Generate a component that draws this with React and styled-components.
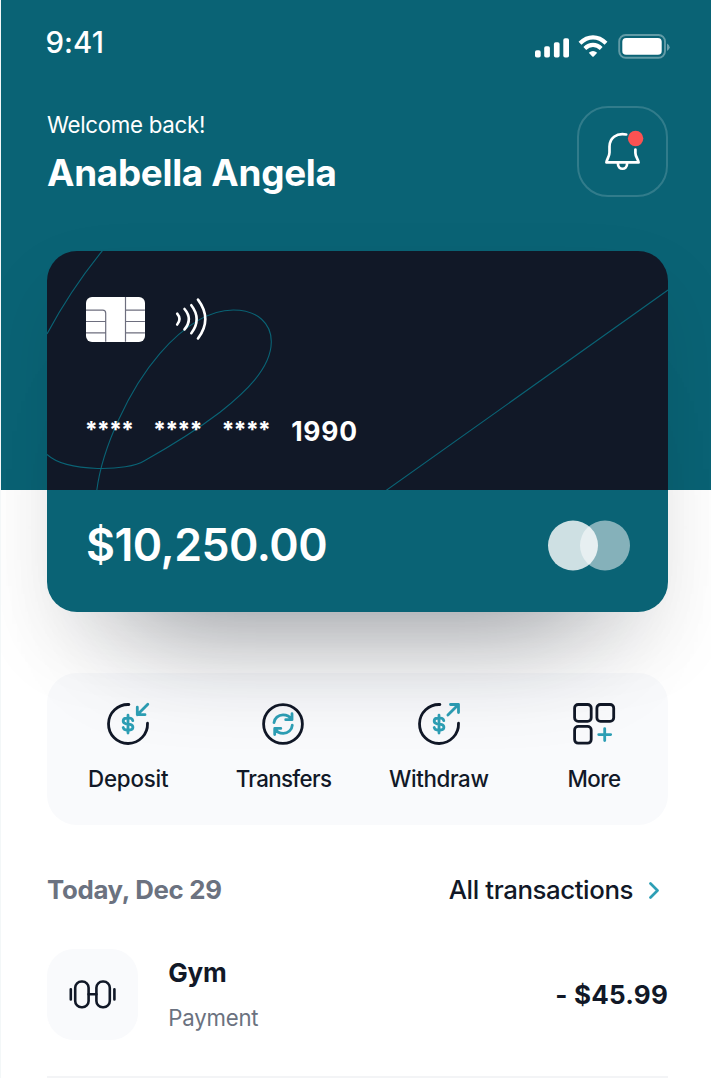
import React from "react";
import styled, { createGlobalStyle } from "styled-components";

const teal = "#0a6375";
const ink = "#111827";
const accent = "#2d9fb5";
const muted = "#6b7280";

const GlobalStyle = createGlobalStyle`
  *, *::before, *::after { box-sizing: border-box; }
  body { margin: 0; background: #fff; overflow: hidden; }
`;

const Screen = styled.main`
  width: 711px;
  height: 1078px;
  overflow: hidden;
  padding: 0 43px 0 46px;
  border-left: 1px solid #f3f7f8;
  font-family: Inter, "Liberation Sans", sans-serif;
  color: ${ink};
  background: linear-gradient(${teal} 490px, #fff 490px);
  display: flex;
  flex-direction: column;
`;

const Text = styled.span`
  display: block;
  white-space: nowrap;
  font-size: ${(p) => p.$size}px;
  line-height: ${(p) => p.$line || 32}px;
  font-weight: ${(p) => p.$weight || 400};
  letter-spacing: ${(p) => p.$track || 0}px;
  color: ${(p) => p.$color || "inherit"};
`;

const StatusBar = styled.header`
  display: flex;
  justify-content: space-between;
  height: 64px;
  padding: 26px 0 0;
  margin: 0 -2px 0 -1.5px;
  color: #fff;
`;

const StatusIconSlot = styled.div`
  padding-top: 6px;
  height: 34px;
`;

const Greeting = styled.section`
  display: flex;
  justify-content: space-between;
  height: 91px;
  margin-top: 42px;
  color: #fff;
`;

const GreetingText = styled.div`
  padding-top: 3px;
  display: flex;
  flex-direction: column;
`;

const BellButton = styled.button`
  width: 91px;
  height: 91px;
  padding: 0;
  border: 2px solid rgba(255, 255, 255, 0.16);
  border-radius: 31px;
  background: none;
  display: grid;
  place-items: center;
`;

const Card = styled.section`
  position: relative;
  z-index: 1;
  height: 361px;
  margin-top: 54px;
  border-radius: 30px;
  color: #fff;
  box-shadow: 0 96px 114px -84px rgba(17, 24, 39, 0.42), 0 36px 80px rgba(0, 0, 0, 0.08);
`;

const CardFace = styled.div`
  position: relative;
  height: 239px;
  overflow: hidden;
  background: ${ink};
  border-radius: 30px 30px 0 0;
  padding: 46px 39px 0;
`;

const CardLines = styled.svg`
  position: absolute;
  inset: 0;
`;

const CardTop = styled.div`
  position: relative;
  display: flex;
  gap: 28px;
  height: 46px;
`;

const CardNumber = styled.div`
  position: relative;
  display: flex;
  margin-top: 72px;
`;

const MaskGroup = styled(Text)`
  width: 68.4px;
  text-indent: -1.3px;
`;

const CardFooter = styled.div`
  height: 122px;
  background: ${teal};
  border-radius: 0 0 30px 30px;
  padding: 0 38px 12px 39px;
  display: flex;
  align-items: center;
  justify-content: space-between;
`;

const Actions = styled.nav`
  display: grid;
  grid-template-columns: repeat(4, 155.3px);
  height: 152px;
  margin-top: 61px;
  padding: 29px 0 0 3.5px;
  border-radius: 30px;
  background: #f9fafc;
`;

const Action = styled.div`
  display: flex;
  flex-direction: column;
  align-items: center;
  gap: 17px;
`;

const ListHeader = styled.div`
  display: flex;
  justify-content: space-between;
  align-items: center;
  height: 32px;
  margin-top: 49px;
`;

const AllLink = styled.a`
  display: flex;
  align-items: center;
  gap: 15px;
  padding-right: 8px;
`;

const Transaction = styled.article`
  display: flex;
  align-items: center;
  height: 91px;
  margin-top: 43px;
`;

const Tile = styled.div`
  width: 91px;
  height: 91px;
  border-radius: 27px;
  background: #f9fafc;
`;

const TransactionText = styled.div`
  flex: 1;
  display: flex;
  flex-direction: column;
  gap: 13px;
  margin-left: 30.3px;
  padding-top: 1px;
`;

const Divider = styled.hr`
  width: 100%;
  height: 2px;
  flex: none;
  margin: 36px 0 0;
  border: 0;
  background: #f3f4f6;
`;

const StatusIcons = () => (
  <svg width="136" height="28" viewBox="534 32 136 28" fill="#fff">
    <rect x="535" y="50.3" width="5.7" height="7.2" rx="1.8" />
    <rect x="544.2" y="46.3" width="5.7" height="11.2" rx="1.8" />
    <rect x="553.9" y="42.3" width="5.7" height="15.2" rx="1.8" />
    <rect x="563.3" y="38.2" width="5.7" height="19.3" rx="1.8" />
    <g fill="none" stroke="#fff" strokeWidth="4.1">
      <path d="M580 43.3Q586 37.4 593 37.4T606 43.3" />
      <path d="M584.8 48.4Q588.6 44.9 593 44.9T601.2 48.4" />
    </g>
    <path d="M588.8 52.7Q593 49.2 597.2 52.7L593.7 56.4Q593 57 592.3 56.4Z" />
    <rect x="619.2" y="35" width="45.8" height="22.8" rx="6.5" fill="none" stroke="#fff" strokeWidth="1.9" opacity=".36" />
    <rect x="622.3" y="38" width="39.4" height="16.8" rx="3.8" />
    <path d="M667 43.5Q669.7 45 669.7 47.2T667 51Z" opacity=".4" />
  </svg>
);

const BellIcon = () => (
  <svg width="44" height="44" viewBox="600.8 130 44 44" fill="none" stroke="#fff" strokeWidth="2.7" strokeLinecap="round" strokeLinejoin="round">
    <path d="M626 134.5C616 132.5 609.3 138.5 609.3 146.5V152.5C609.3 156.5 606.7 158.8 606.2 162.4H638.4C637.8 158.8 635.2 156.5 635.2 153V149.5" />
    <path d="M617.7 163.5C617.7 170.5 626.9 170.5 626.9 163.5" />
    <circle cx="635.4" cy="138.5" r="7.7" fill="#fb5252" stroke="none" />
  </svg>
);

const ChipIcon = () => (
  <svg width="60" height="46" viewBox="86.3 297.2 60 46" fill="none">
    <rect x="86.3" y="297.2" width="59" height="45" rx="6" fill="#fff" />
    <g stroke="#6d6e7e" strokeWidth="1.2">
      <path d="M86 310.4H103Q106 310.4 106 313.4V342M86 321.7H106M86 333.1H106" />
      <path d="M125.8 297V342M125.8 310.4H145.2M125.8 321.7H145.2M125.8 333.1H145.2" />
    </g>
  </svg>
);

const ContactlessIcon = () => (
  <svg width="36" height="46" viewBox="174 297 36 46" fill="none" stroke="#fff" strokeWidth="2.6" strokeLinecap="round">
    <path d="M177.2 313.7Q181.8 319.1 177.2 324.5" />
    <path d="M184.5 309Q193.2 319.1 184.5 329.4" />
    <path d="M191.3 305.2Q202 319.2 191.3 333.2" />
    <path d="M198 299.6Q212.6 319.2 198 338.5" />
  </svg>
);

const ActionSvg = ({ children }) => (
  <svg width="44" height="44" viewBox="0 0 44 44" fill="none" strokeWidth="2.8" strokeLinecap="round" strokeLinejoin="round">
    {children}
  </svg>
);

const MoneyRing = () => (
  <>
    <path stroke={ink} d="M22.9 2.5A19.5 19.5 0 1 0 41.5 21.2" />
    <path stroke={accent} d="M26.8 18.7C26.4 17 25.1 16.2 23.5 16.2H20.6C18.6 16.2 17.2 17.4 17.2 19.1S18.3 21.5 20 21.8L24 22.4C25.8 22.8 26.9 23.8 26.9 25.3S25.5 28 23.5 28H20.5C18.9 28 17.6 27.2 17.2 25.5M22 13.2V31" />
  </>
);

const actions = [
  {
    label: "Deposit",
    track: -0.2,
    art: <><MoneyRing /><path stroke={accent} d="M41.8 2.3L31.3 12.7M31.3 5.2V12.7H39" /></>,
  },
  {
    label: "Transfers",
    track: -0.65,
    art: (
      <>
        <circle cx="22" cy="22" r="19.4" stroke={ink} />
        <path stroke={accent} d="M13 20.6C13.5 16.3 17.2 12.9 22 12.9C26 12.9 29 14.8 30.8 17.6M31 11.7V17.7H24.7M31.3 23.2C31 27.9 27 31.4 22.3 31.4C18.3 31.4 15.4 29.3 13.8 26.5M13.7 32.5V26.4H19.8" />
      </>
    ),
  },
  {
    label: "Withdraw",
    track: -0.35,
    art: <><MoneyRing /><path stroke={accent} d="M30.9 13L41.5 2.5M33.5 2.5H41.5V10.5" /></>,
  },
  {
    label: "More",
    track: -0.5,
    art: (
      <>
        <rect x="2.6" y="2.5" width="16.6" height="16.8" rx="3.6" stroke={ink} />
        <rect x="24.9" y="2.5" width="16.8" height="16.8" rx="3.6" stroke={ink} />
        <rect x="2.6" y="24.4" width="16.6" height="16.8" rx="3.6" stroke={ink} />
        <path stroke={accent} d="M32.7 26.6V38.6M26.7 32.6H38.7" />
      </>
    ),
  },
];

const DumbbellIcon = () => (
  <svg width="91" height="91" viewBox="0 0 91 91" fill="none" stroke={ink} strokeWidth="2.6" strokeLinecap="round">
    <rect x="28.2" y="32.5" width="13.4" height="25.7" rx="6.3" />
    <rect x="49.4" y="32.5" width="13.4" height="25.7" rx="6.3" />
    <path d="M41.6 45.2H49.4M23.8 40.2V50.4M67.4 40.2V50.4" />
  </svg>
);

export default function App() {
  return (
    <>
      <GlobalStyle />
      <Screen>
        <StatusBar>
          <Text $size={29.4} $weight={550} $line={34} $track={0.1}>9:41</Text>
          <StatusIconSlot><StatusIcons /></StatusIconSlot>
        </StatusBar>
        <Greeting>
          <GreetingText>
            <Text $size={22.3} $track={-0.3}>Welcome back!</Text>
            <Text $size={36.8} $weight={700} $line={64} $track={-0.28}>Anabella Angela</Text>
          </GreetingText>
          <BellButton aria-label="Notifications"><BellIcon /></BellButton>
        </Greeting>
        <Card>
          <CardFace>
            <CardLines width="621" height="239" viewBox="0 0 621 239" fill="none" stroke={teal} strokeWidth="1.1">
              <path d="M0 83Q24 38 56 -1" />
              <path d="M49.7 240C55 197 82 138 113 102.3C137 75 162 59 186.3 59C211 59 224.5 73 224.3 91C224 118 197 142 173 161.3C151 178 122 196 97 210C82 220 20 222 0 203.5" />
              <path d="M339 239.5L621 39" />
            </CardLines>
            <CardTop><ChipIcon /><ContactlessIcon /></CardTop>
            <CardNumber>
              <MaskGroup $size={22.5} $weight={850} $line={30} $track={-1}>****</MaskGroup>
              <MaskGroup $size={22.5} $weight={850} $line={30} $track={-1}>****</MaskGroup>
              <MaskGroup $size={22.5} $weight={850} $line={30} $track={-1}>****</MaskGroup>
              <Text $size={26.4} $weight={700} $line={32} $track={0.8}>1990</Text>
            </CardNumber>
          </CardFace>
          <CardFooter>
            <Text $size={44.6} $weight={620} $line={56} $track={-0.5}>$10,250.00</Text>
            <svg width="82" height="51" viewBox="0 -0.5 82 51" fill="#fff">
              <circle cx="57" cy="25" r="25" opacity=".5" />
              <circle cx="25" cy="25" r="25" opacity=".8" />
            </svg>
          </CardFooter>
        </Card>
        <Actions>
          {actions.map(({ label, art, track }) => (
            <Action key={label}>
              <ActionSvg>{art}</ActionSvg>
              <Text $size={22.3} $weight={500} $line={32} $track={track}>{label}</Text>
            </Action>
          ))}
        </Actions>
        <ListHeader>
          <Text $size={25.8} $weight={650} $color={muted} $track={-0.3}>Today, Dec 29</Text>
          <AllLink>
            <Text $size={25.8} $weight={450} $track={-0.4}>All transactions</Text>
            <svg width="12" height="18" viewBox="0 0 12 18" fill="none" stroke={accent} strokeWidth="2.7" strokeLinecap="round" strokeLinejoin="round">
              <path d="M2.5 2.5L9.5 9.5L2.5 16.5" />
            </svg>
          </AllLink>
        </ListHeader>
        <Transaction>
          <Tile><DumbbellIcon /></Tile>
          <TransactionText>
            <Text $size={26} $weight={700} $track={-0.2}>Gym</Text>
            <Text $size={22.2} $color={muted} $track={-0.2}>Payment</Text>
          </TransactionText>
          <Text $size={26} $weight={680} $line={34} $track={0.2}>- $45.99</Text>
        </Transaction>
        <Divider />
      </Screen>
    </>
  );
}
